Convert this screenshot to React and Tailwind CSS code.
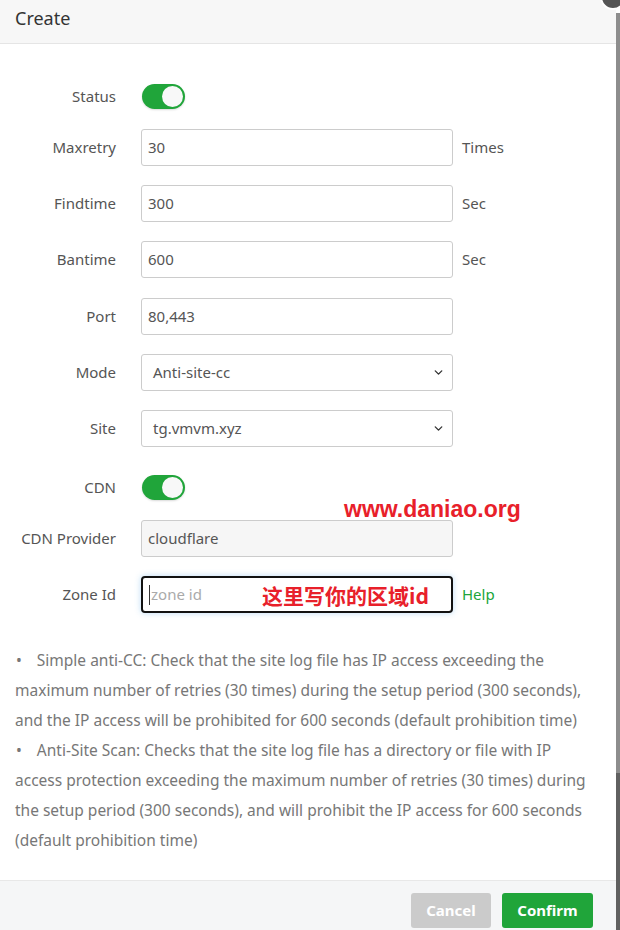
import React from 'react';
import { ChevronDown } from 'lucide-react';

const font = { fontFamily: '"Noto Sans", "Noto Sans CJK SC", sans-serif' };

const Toggle = () => (
  <div className="w-[43px] h-[25px] rounded-full bg-[#20a53a] flex items-center justify-end pr-[2px] shadow-[0_1px_2px_rgba(0,0,0,0.15)]">
    <div className="w-[21px] h-[21px] rounded-full bg-[#f8f8f8]" />
  </div>
);

const Row = ({ label, children, suffix, className = '' }) => (
  <div className={`flex items-center ${className}`}>
    <div className="w-[116px] text-right text-[15px] text-[#555] shrink-0">{label}</div>
    <div className="ml-[25px] relative">{children}</div>
    {suffix}
  </div>
);

const Input = ({ value, bg = 'bg-white' }) => (
  <div className={`w-[312px] h-[37px] border border-[#ccc] rounded-[3px] ${bg} flex items-center px-[6px] text-[15px] text-[#555]`}>
    {value}
  </div>
);

const Select = ({ value }) => (
  <div className="w-[312px] h-[37px] border border-[#ccc] rounded-[3px] bg-white flex items-center justify-between pl-[11px] pr-[7px] text-[15px] text-[#555]">
    <span>{value}</span>
    <ChevronDown className="w-[13px] h-[13px] text-[#333]" strokeWidth={2.5} />
  </div>
);

const Suffix = ({ children, className = 'text-[#555]' }) => (
  <span className={`ml-[9px] text-[15px] ${className}`}>{children}</span>
);

export default function App() {
  return (
    <div className="w-[620px] h-[930px] bg-white flex relative overflow-hidden" style={font}>
      <div className="w-[616px] h-full flex flex-col">
        {/* Header */}
        <div className="h-[44px] shrink-0 bg-[#f7f7f7] border-b border-[#e5e5e5] flex items-center pb-[6px] px-[15px] text-[18px] text-[#333]">
          Create
        </div>

        {/* Body */}
        <div className="flex-1 relative">
          <div className="flex flex-col pt-[40px]">
            <Row label="Status" className="h-[25px]">
              <div className="ml-[1px]"><Toggle /></div>
            </Row>
            <Row label="Maxretry" className="mt-[20px]" suffix={<Suffix>Times</Suffix>}>
              <Input value="30" />
            </Row>
            <Row label="Findtime" className="mt-[19px]" suffix={<Suffix>Sec</Suffix>}>
              <Input value="300" />
            </Row>
            <Row label="Bantime" className="mt-[19px]" suffix={<Suffix>Sec</Suffix>}>
              <Input value="600" />
            </Row>
            <Row label="Port" className="mt-[20px]">
              <Input value="80,443" />
            </Row>
            <Row label="Mode" className="mt-[19px]">
              <Select value="Anti-site-cc" />
            </Row>
            <Row label="Site" className="mt-[19px]">
              <Select value="tg.vmvm.xyz" />
            </Row>
            <Row label="CDN" className="mt-[28px] h-[25px]">
              <div className="ml-[1px]"><Toggle /></div>
            </Row>
            <Row label="CDN Provider" className="mt-[20px]">
              <Input value="cloudflare" bg="bg-[#f6f6f6]" />
            </Row>
            <Row label="Zone Id" className="mt-[19px]" suffix={<Suffix className="text-[#20a53a]">Help</Suffix>}>
              <div className="w-[312px] h-[37px] border-2 border-[#111] rounded-[4px] bg-white flex items-center pl-[6px] text-[15px] text-[#aaa] shadow-[0_0_6px_rgba(102,175,233,0.45)]">
                <span className="w-px h-[20px] bg-[#333] mr-px" />
                zone id
              </div>
            </Row>
          </div>

          {/* Notes */}
          <ul className="mt-[32px] pl-[15px] pr-[14px] text-[15.5px] leading-[30px] text-[#777]">
            <li>
              <span className="mr-[15px] pl-[1px]">•</span>
              Simple anti-CC: Check that the site log file has IP access exceeding the maximum number of retries (30 times) during the setup period (300 seconds), and the IP access will be prohibited for 600 seconds (default prohibition time)
            </li>
            <li>
              <span className="mr-[15px] pl-[1px]">•</span>
              Anti-Site Scan: Checks that the site log file has a directory or file with IP access protection exceeding the maximum number of retries (30 times) during the setup period (300 seconds), and will prohibit the IP access for 600 seconds (default prohibition time)
            </li>
          </ul>

          {/* Watermarks */}
          <div className="absolute left-[344px] top-[448px] text-[23px] font-bold text-[#e8202a]" style={{ fontFamily: '"Liberation Sans", sans-serif' }}>
            www.daniao.org
          </div>
          <div className="absolute left-[262px] top-[536px] text-[21px] font-bold text-[#e8202a]" style={{ fontFamily: '"Noto Sans CJK SC", sans-serif' }}>
            这里写你的区域id
          </div>
        </div>

        {/* Footer */}
        <div className="h-[50px] shrink-0 bg-[#f5f6f7] border-t border-[#e8e8e8] flex justify-end items-start pt-[12px] pr-[23px] gap-[11px]">
          <button className="w-[80px] h-[35px] rounded-[3px] bg-[#cbcbcb] text-white text-[15px] font-bold">Cancel</button>
          <button className="w-[91px] h-[35px] rounded-[3px] bg-[#20a53a] text-white text-[15px] font-bold">Confirm</button>
        </div>
      </div>

      {/* Right strip */}
      <div className="w-[4px] h-full flex flex-col">
        <div className="h-[13px] bg-white" />
        <div className="flex-1 bg-[#8d8d8d]" />
        <div className="h-[157px] bg-[#606060]" />
      </div>

      {/* Close button */}
      <div className="absolute right-[-6px] top-[-16px] w-[26px] h-[26px] rounded-full bg-[#555] border-2 border-white" />
    </div>
  );
}
